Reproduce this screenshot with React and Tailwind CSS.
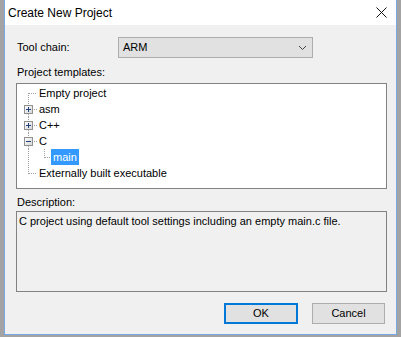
const rows = [
  { label: "Empty project", kind: "first" },
  { label: "asm", kind: "plus" },
  { label: "C++", kind: "plus" },
  { label: "C", kind: "minus" },
  { label: "main", kind: "child", selected: true },
  { label: "Externally built executable", kind: "last" },
];

const dot = "#a0a0a0";

function ExpandBox({ open }) {
  return (
    <g shapeRendering="crispEdges">
      <defs>
        <linearGradient id="bx" x1="0" y1="0" x2="1" y2="1">
          <stop offset="0" stopColor="#ffffff" />
          <stop offset="1" stopColor="#d4d4d4" />
        </linearGradient>
      </defs>
      <rect x="7.5" y="4.5" width="8" height="8" fill="url(#bx)" stroke="#919191" />
      <line x1="9" y1="8.5" x2="14" y2="8.5" stroke="#20407a" />
      {!open && <line x1="11.5" y1="6" x2="11.5" y2="11" stroke="#20407a" />}
    </g>
  );
}

function Guides({ kind }) {
  const w = kind === "child" ? 34 : 22;
  return (
    <svg width={w} height="16" className="shrink-0" shapeRendering="crispEdges">
      <g stroke={dot} strokeDasharray="1 1">
        {kind === "first" && <line x1="11.5" y1="8" x2="11.5" y2="16" />}
        {kind === "last" && <line x1="11.5" y1="0" x2="11.5" y2="9" />}
        {(kind === "first" || kind === "last") && <line x1="12" y1="8.5" x2="20" y2="8.5" />}
        {(kind === "plus" || kind === "minus") && (
          <>
            <line x1="11.5" y1="0" x2="11.5" y2="4" />
            <line x1="11.5" y1="13" x2="11.5" y2="16" />
            <line x1="17" y1="8.5" x2="20" y2="8.5" />
          </>
        )}
        {kind === "child" && (
          <>
            <line x1="11.5" y1="0" x2="11.5" y2="16" />
            <line x1="27.5" y1="0" x2="27.5" y2="9" />
            <line x1="28" y1="8.5" x2="33" y2="8.5" />
          </>
        )}
      </g>
      {kind === "plus" && <ExpandBox open={false} />}
      {kind === "minus" && <ExpandBox open={true} />}
    </svg>
  );
}

export default function App() {
  return (
    <div
      className="w-[401px] h-[337px] bg-[#a3a3a3] px-[4px] pb-[2px] text-black"
      style={{ fontFamily: '"Liberation Sans", Arial, sans-serif' }}
    >
      <div className="h-full flex flex-col bg-[#f0f0f0] border-l border-r border-b border-[#78a8e4]">
        {/* title bar */}
        <div className="h-[25px] shrink-0 bg-white flex items-center justify-between pl-[3px] pr-[9px]">
          <span className="text-[12px] leading-none">Create New Project</span>
          <svg width="11" height="11" viewBox="0 0 11 11">
            <path d="M0.5 0.5 L10.5 10.5 M10.5 0.5 L0.5 10.5" stroke="#111" strokeWidth="1" />
          </svg>
        </div>

        <div className="flex flex-col pl-[11px] pr-[9px] text-[11px] leading-[13px]">
          <div className="mt-[12px] flex items-center">
            <span className="w-[102px] pl-[1px]">Tool chain:</span>
            <div className="w-[195px] h-[21px] bg-[#e1e1e1] border border-[#adadad] flex items-center justify-between pl-[4px] pr-[5px]">
              <span>ARM</span>
              <svg width="9" height="6" viewBox="0 0 9 6">
                <path d="M1 1 L4.5 4.5 L8 1" fill="none" stroke="#444" strokeWidth="1" />
              </svg>
            </div>
          </div>

          <span className="mt-[8px] pl-[1px]">Project templates:</span>
          <div className="mt-[4px] h-[106px] bg-white border border-[#828282] pt-[1px]">
            {rows.map((r) => (
              <div key={r.label} className="h-[16px] flex items-center">
                <Guides kind={r.kind} />
                {r.selected ? (
                  <span className="bg-[#3399ff] text-white h-[16px] flex items-center px-[2px]">{r.label}</span>
                ) : (
                  <span>{r.label}</span>
                )}
              </div>
            ))}
          </div>

          <span className="mt-[7px] pl-[1px]">Description:</span>
          <div className="mt-[2px] h-[81px] border border-[#828282] pl-[2px] pt-[3px]">
            C project using default tool settings including an empty main.c file.
          </div>

          <div className="mt-[11px] flex justify-end gap-[14px] pr-[2px]">
            <button className="w-[74px] h-[21px] bg-[#e1e1e1] border-2 border-[#0078d7] flex items-center justify-center">
              OK
            </button>
            <button className="w-[73px] h-[21px] bg-[#e1e1e1] border border-[#adadad] flex items-center justify-center">
              Cancel
            </button>
          </div>
        </div>
      </div>
    </div>
  );
}
